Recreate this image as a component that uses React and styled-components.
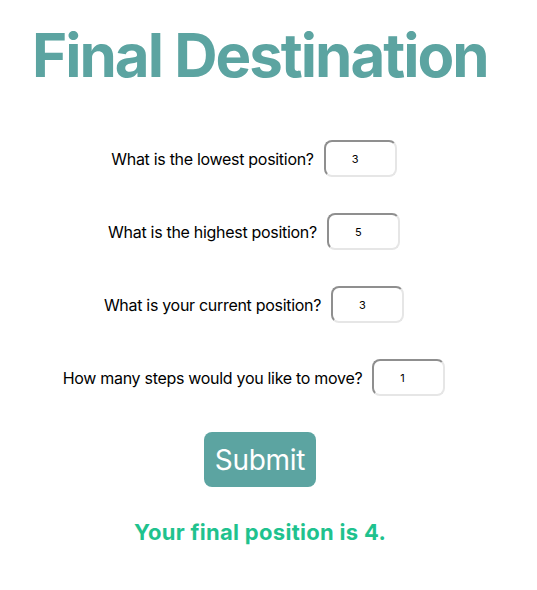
import React, { useState } from "react";
import styled, { createGlobalStyle } from "styled-components";

const GlobalStyle = createGlobalStyle`
  body {
    margin: 0;
    background: #ffffff;
    font-family: Inter, "Noto Sans", sans-serif;
  }
`;

const questions = [
  { id: "low", label: "What is the lowest position?", value: "3" },
  { id: "high", label: "What is the highest position?", value: "5" },
  { id: "current", label: "What is your current position?", value: "3" },
  { id: "steps", label: "How many steps would you like to move?", value: "1" },
];

export default function App() {
  const [values, setValues] = useState(
    Object.fromEntries(questions.map((q) => [q.id, q.value]))
  );

  return (
    <>
      <GlobalStyle />
      <Page>
        <Title>Final Destination</Title>
        <Form onSubmit={(e) => e.preventDefault()}>
          {questions.map((q) => (
            <Row key={q.id}>
              <Label htmlFor={q.id}>{q.label}</Label>
              <NumberInput
                id={q.id}
                value={values[q.id]}
                onChange={(e) => setValues({ ...values, [q.id]: e.target.value })}
              />
            </Row>
          ))}
          <SubmitButton type="submit">Submit</SubmitButton>
        </Form>
        <Result>Your final position is 4.</Result>
      </Page>
    </>
  );
}

const Page = styled.div`
  width: 520px;
  padding-top: 18px;
`;

const Title = styled.h1`
  margin: 0 0 0 32px;
  font-size: 60px;
  font-weight: 700;
  line-height: 75px;
  color: #5ca4a1;
  letter-spacing: -2px;
  white-space: nowrap;
`;

const Form = styled.form`
  display: flex;
  flex-direction: column;
  align-items: center;
  margin-top: 47px;
`;

const Row = styled.div`
  display: flex;
  align-items: center;
  gap: 10px;
  padding-right: 12px;
  margin-bottom: 36px;
`;

const Label = styled.label`
  font-size: 16px;
  letter-spacing: -0.3px;
  color: #000;
`;

const NumberInput = styled.input`
  box-sizing: border-box;
  width: 73px;
  height: 37px;
  padding: 0 0 0 26px;
  border: 2px solid #e6e6e6;
  border-top-color: #8f8f8f;
  border-left-color: #8f8f8f;
  border-radius: 8px;
  font-family: Inter, sans-serif;
  font-size: 11px;
  color: #000;
  outline: none;
`;

const SubmitButton = styled.button`
  width: 112px;
  height: 55px;
  border: none;
  border-radius: 8px;
  background: #5ca4a1;
  color: #ffffff;
  font-family: Inter, sans-serif;
  font-size: 28px;
  font-weight: 400;
  letter-spacing: -0.3px;
  cursor: pointer;
`;

const Result = styled.p`
  margin: 32px 0 0;
  text-align: center;
  font-size: 22px;
  font-weight: 700;
  letter-spacing: 0.3px;
  color: #1fc28e;
`;
